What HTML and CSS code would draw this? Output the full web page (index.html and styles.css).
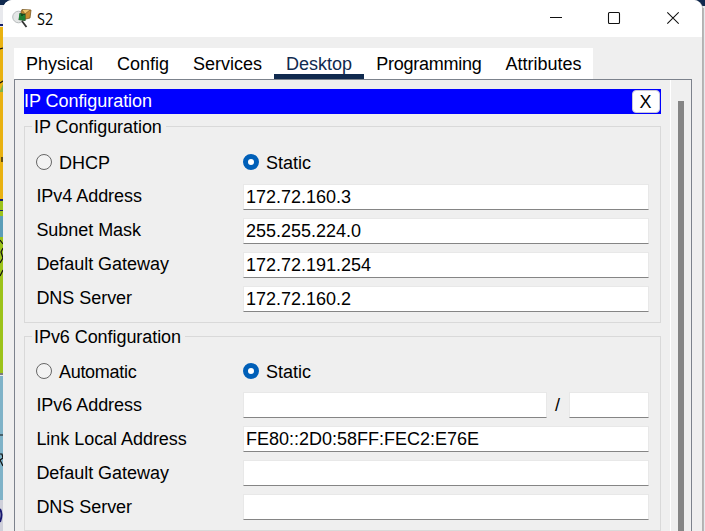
FILE: index.html
```html
<!DOCTYPE html>
<html lang="en">
<head>
<meta charset="utf-8">
<title>S2</title>
<link rel="stylesheet" href="styles.css">
</head>
<body>
<svg class="map" width="705" height="531" viewBox="0 0 705 531" aria-hidden="true">
  <path fill="#e8e9ed" d="M0 0h705v531H0z"/>
  <path fill="#10294f" d="M0 0h705v5H0z"/>
  <path fill="#e9b211" d="M0 27h4v173H0z"/>
  <path fill="#16206c" d="M0 24h4v2H0zM0 199h4v2H0zM0 210h4v1H0z"/>
  <path fill="#79b14e" d="M0 91l3-7v8H0z"/>
  <path fill="#9cc31b" d="M0 201h4v9H0zM0 211h4v162H0z"/>
  <path fill="#5b9eb8" d="M0 216h4v21H0z"/>
  <path fill="#7fb3c8" d="M0 376h4v124H0z"/>
  <path fill="#cfd0da" d="M0 500h4v31H0z"/>
  <path fill="none" stroke="#111" stroke-width="1.2" d="M0 49l3-1M0 83l3-2M2 162v-5M0 240l3 4M3 248l-2 4 2 6-3 5M0 276l3-6M0 374h3M0 435h3M0 454h2l1 4-3 2 3 6"/>
  <path fill="none" stroke="#191970" stroke-width="2" d="M0 509q3 5 0 13"/>
  <path fill="#b8b8b8" d="M702 8h2v523h-2z"/>
  <path fill="#10294f" d="M695 0h10v6h-3z"/>
</svg>
<div class="window">
  <header class="titlebar">
    <svg class="app-icon" width="20" height="20" viewBox="0 0 20 20">
      <circle cx="6.500" cy="8" r="5.800" fill="#e4e6e6" stroke="#b6babb"/>
      <path d="M9 3l1-2.500 9 .5-1 8-8 2z" fill="#c98d30" stroke="#795b27" stroke-width=".8"/>
      <path d="M10 1l3 4 5-4" fill="#efc66b" stroke="#856027" stroke-width=".8"/>
      <path d="M7.500 4l6 1v7l-7-1z" fill="#164c20"/>
      <path d="M8 5v6M10 7v4M12 6v5" stroke="#28b248"/>
      <path d="M10 12l4.500 6" stroke="#333" stroke-width="1.800"/>
    </svg>
    <span class="title">S2</span>
    <svg class="controls" width="130" height="16" viewBox="0 0 130 16" fill="none" stroke="#111" stroke-width="1.1">
      <path d="M1 6.5h12"/>
      <rect x="59.5" y="1.500" width="11" height="11" rx="1"/>
      <path d="M118.3 1.300l11.4 11.4M129.7 1.300l-11.4 11.4"/>
    </svg>
  </header>
  <nav class="tabs">
    <span class="tab">Physical</span>
    <span class="tab">Config</span>
    <span class="tab">Services</span>
    <span class="tab active">Desktop</span>
    <span class="tab tight">Programming</span>
    <span class="tab">Attributes</span>
  </nav>
  <div class="pane">
    <main class="content">
      <div class="heading"><span>IP Configuration</span><span class="close">X</span></div>
      <section class="group">
        <h2 class="legend">IP Configuration</h2>
        <div class="row radios"><span class="label"><i class="radio"></i><span class="caption">DHCP</span></span><span class="choice"><i class="radio on"></i><span class="caption">Static</span></span></div>
        <div class="row"><span class="label">IPv4 Address</span><span class="field">172.72.160.3</span></div>
        <div class="row"><span class="label">Subnet Mask</span><span class="field">255.255.224.0</span></div>
        <div class="row"><span class="label">Default Gateway</span><span class="field">172.72.191.254</span></div>
        <div class="row"><span class="label">DNS Server</span><span class="field">172.72.160.2</span></div>
      </section>
      <section class="group second">
        <h2 class="legend">IPv6 Configuration</h2>
        <div class="row radios"><span class="label tight"><i class="radio"></i><span class="caption">Automatic</span></span><span class="choice"><i class="radio on"></i><span class="caption">Static</span></span></div>
        <div class="row"><span class="label">IPv6 Address</span><span class="field"></span><span class="slash">/</span><span class="field prefix"></span></div>
        <div class="row"><span class="label">Link Local Address</span><span class="field">FE80::2D0:58FF:FEC2:E76E</span></div>
        <div class="row"><span class="label">Default Gateway</span><span class="field"></span></div>
        <div class="row"><span class="label">DNS Server</span><span class="field"></span></div>
      </section>
    </main>
    <div class="scroll"><div class="thumb"></div></div>
  </div>
</div>
</body>
</html>
```
FILE: styles.css
```css
* { box-sizing: border-box; }
body {
  margin: 0;
  width: 705px;
  height: 531px;
  overflow: hidden;
  font: 18px/24px "Liberation Sans", Arial, sans-serif;
  color: #000;
}
.map { position: absolute; left: 0; top: 0; z-index: -1; }
.window {
  width: 700px;
  height: 531px;
  margin-left: 3px;
  background: #efefef;
  border-right: 1px solid #b2b2b2;
  border-radius: 9px 9px 0 0;
  overflow: hidden;
}
.titlebar {
  display: flex;
  align-items: center;
  height: 37px;
  padding: 0 23px 0 9px;
  background: #fff;
}
.title { margin: 0 0 0 5px; font: 16px/20px "Open Sans", sans-serif; transform: scaleX(.9); transform-origin: left; }
.controls { margin-left: auto; }
.tabs {
  display: flex;
  width: 579px;
  height: 31px;
  margin: 11px 0 0 11px;
  background: #fff;
}
.tab { padding: 4px 12px 0; white-space: nowrap; }
.tab.tight { letter-spacing: -.24px; }
.tab.active { color: #102a4f; border-bottom: 5px solid #102a4f; }
.pane {
  display: flex;
  width: 678px;
  height: 470px;
  margin-left: 11px;
  border: 1px solid #7c828c;
}
.content { width: 655px; padding: 9px 0 0 9px; }
.heading {
  display: flex;
  justify-content: space-between;
  width: 637px;
  height: 25px;
  background: #00f;
  color: #fff;
  letter-spacing: -.05px;
}
.close {
  width: 28px;
  height: 23px;
  margin: 1px 1px 0 0;
  padding-right: 1px;
  border: 1px solid #c8c8d8;
  border-radius: 4px;
  background: #fff;
  color: #000;
  line-height: 22px;
  text-align: center;
}
.group {
  width: 637px;
  height: 197px;
  margin-top: 12px;
  padding: 0 11px;
  border: 1px solid #d9d9d9;
}
.group.second { margin-top: 13px; height: 195px; }
.legend {
  width: max-content;
  height: 24px;
  margin: -12px 0 0 -4px;
  padding: 0 4px 0 2px;
  background: #efefef;
  font-size: 18px;
  font-weight: 400;
  letter-spacing: -.06px;
}
.row { display: flex; height: 26px; margin-bottom: 8px; }
.row.radios { height: 24px; margin: 11px 0 10px; }
.second .row.radios { margin: 10px 0 9px; }
.label { width: 207px; flex: none; padding-left: .4px; letter-spacing: -.04px; }
.second .row:not(.radios) .label, .slash { padding-top: 1px; }
.label.tight { letter-spacing: -.3px; }
.radios .label, .choice { display: flex; align-items: center; }
.radios .label { padding-left: 0; }
.caption { padding-top: 2px; }
.radio {
  width: 16px;
  height: 16px;
  margin-right: 7px;
  border: 1px solid #666;
  border-radius: 50%;
  background: #f3f3f3;
}
.radio.on { border: 5px solid #005fb8; background: #fff; }
.field {
  flex: 1;
  padding: 0 2px;
  border: 1px solid #e8e8e8;
  border-bottom-color: #858585;
  background: #fff;
}
.slash { width: 22px; padding-right: 1px; text-align: center; }
.field.prefix { flex: 0 0 80px; }
.scroll { flex: 1; padding: 21px 0 0 7px; border-left: 1px solid #fff; }
.thumb { width: 6px; height: 450px; background: #858585; }
```
